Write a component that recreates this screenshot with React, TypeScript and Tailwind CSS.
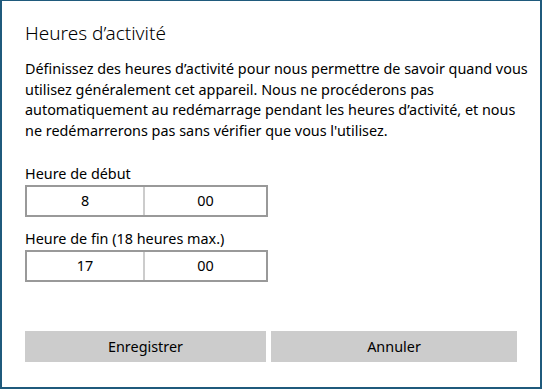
import React from "react";

const TimeBox = ({ hour, minute }: { hour: string; minute: string }) => (
  <div className="flex h-[32px] w-[243px] border-2 border-[#999999] bg-white">
    <div className="flex w-[118px] items-center justify-center border-r-2 border-[#cccccc]">{hour}</div>
    <div className="flex flex-1 items-center justify-center">{minute}</div>
  </div>
);

export default function App() {
  return (
    <div
      className="h-[389px] w-[542px] border-x-2 border-b-2 border-t border-[#1f5a7c] bg-white px-[23px] pt-[19px] text-[14.4px] text-black"
      style={{ fontFamily: '"Noto Sans", "Open Sans", sans-serif' }}
    >
      <h1 className="text-[19px] font-light leading-[26px]">Heures d’activité</h1>
      <p className="mt-[13px] w-[510px] leading-[20.5px]">
        Définissez des heures d’activité pour nous permettre de savoir quand vous utilisez généralement cet appareil.
        Nous ne procéderons pas automatiquement au redémarrage pendant les heures d’activité, et nous ne redémarrerons
        pas sans vérifier que vous l'utilisez.
      </p>

      <div className="mb-[2px] mt-[23px] leading-[19px]">Heure de début</div>
      <TimeBox hour="8" minute="00" />

      <div className="mb-[2px] mt-[12px] leading-[19px]">Heure de fin (18 heures max.)</div>
      <TimeBox hour="17" minute="00" />

      <div className="mt-[49px] flex gap-[5px]">
        <button className="flex h-[31px] w-[241px] items-center justify-center bg-[#cccccc]">Enregistrer</button>
        <button className="flex h-[31px] w-[246px] items-center justify-center bg-[#cccccc]">Annuler</button>
      </div>
    </div>
  );
}
